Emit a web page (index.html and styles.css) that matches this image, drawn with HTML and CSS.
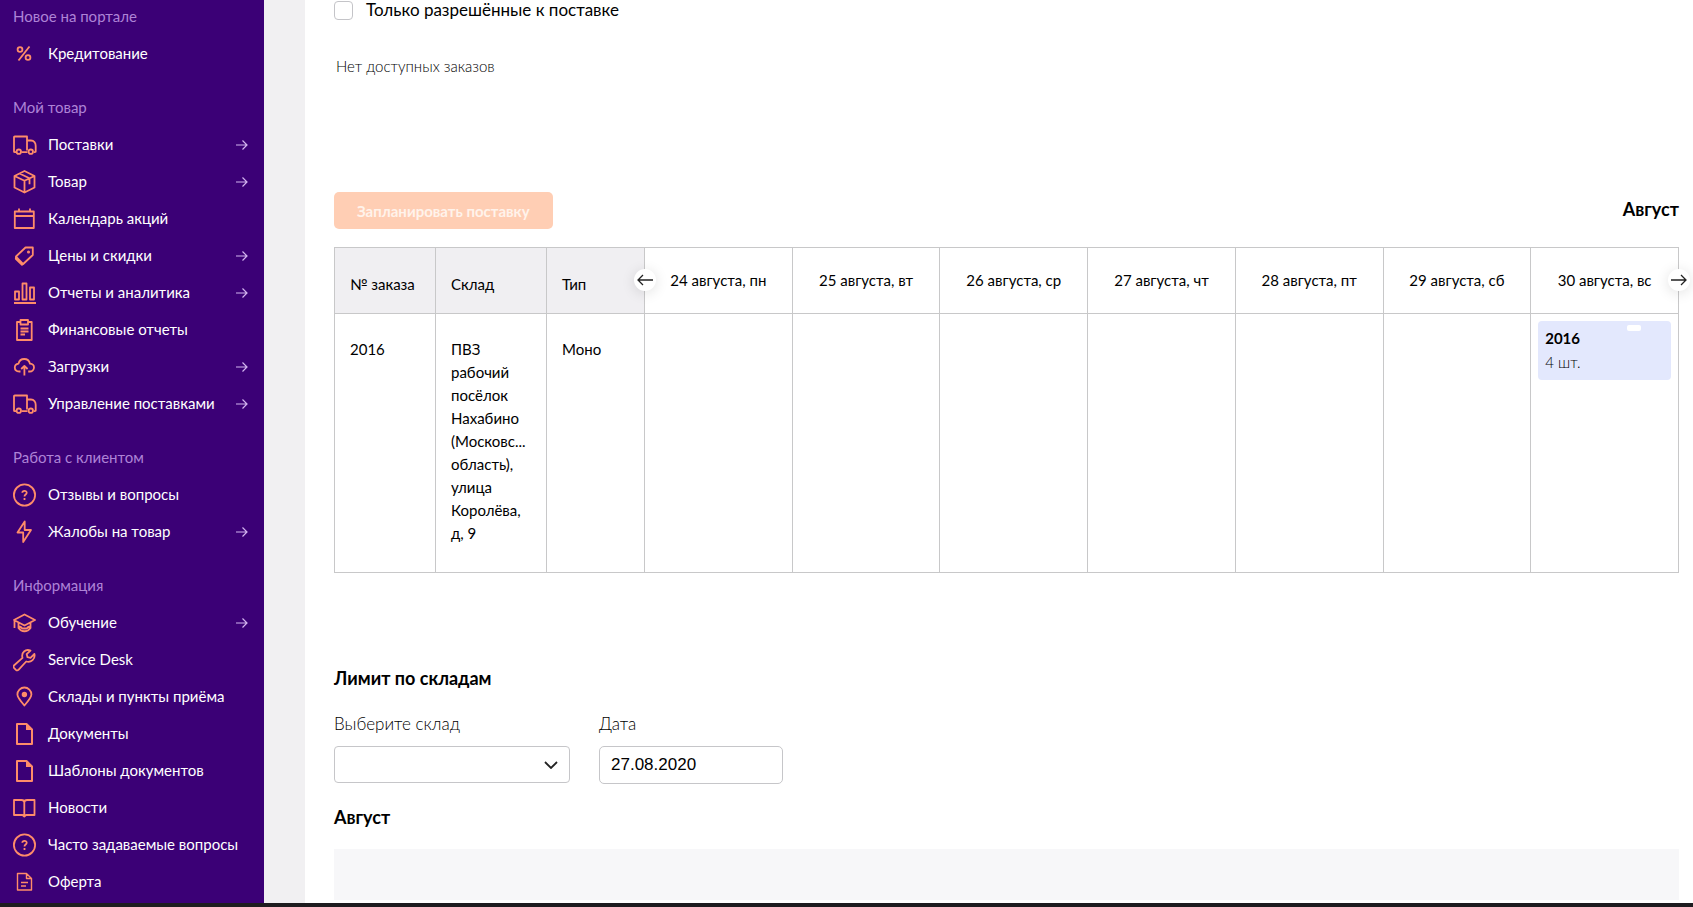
FILE: index.html
```html
<!DOCTYPE html>
<html lang="ru">
<head>
<meta charset="utf-8">
<title>Поставки</title>
<link rel="stylesheet" href="styles.css">
</head>
<body>
<svg class="defs" aria-hidden="true">
  <symbol id="arrow" viewBox="0 0 12 12"><path d="M0 6h11M6.500 1.500L11 6l-4.500 4.500"/></symbol>
  <symbol id="truck" viewBox="0 0 24 24"><path d="M3.500 19.200H1.800a.8.800 0 0 1-.8-.8V4.300a.8.800 0 0 1 .8-.8h12.200v14M8.500 19.200h6M14 7.500h4c3 0 4.700 2.500 4.700 5.500v5.400a.8.800 0 0 1-.8.800h-1"/><circle cx="5.800" cy="18.700" r="2.200"/><circle cx="17.800" cy="18.700" r="2.200"/></symbol>
  <symbol id="question" viewBox="0 0 24 24"><circle cx="11.500" cy="12" r="10.600"/><path d="M9.300 9.800c.2-2.600 4.500-2.500 4.400 0 0 1.800-2.200 1.600-2.200 3.600M11.500 15v1.900"/></symbol>
  <symbol id="doc" viewBox="0 0 24 24"><path stroke-width="2" d="M4 2h9.500L19 7.500V22H4z"/><path fill="currentColor" stroke="none" d="M13 2v6h6z"/></symbol>
</svg>
<div class="page">
  <div class="workspace">
    <nav class="sidebar" aria-label="Меню портала">
      <section class="group">
        <h2 class="group-title">Новое на портале</h2>
        <a class="item" href="#"><svg class="icon" viewBox="0 0 24 24"><circle cx="7" cy="7.500" r="2.400"/><circle cx="15" cy="15.500" r="2.400"/><path d="M16.500 4.500L5.500 18.500"/></svg><span class="label">Кредитование</span></a>
      </section>
      <section class="group">
        <h2 class="group-title">Мой товар</h2>
        <a class="item" href="#"><svg class="icon"><use href="#truck"/></svg><span class="label">Поставки</span><svg class="arrow"><use href="#arrow"/></svg></a>
        <a class="item" href="#"><svg class="icon" viewBox="0 0 24 24"><path d="M11.500 1L21.500 6v11.500l-10 5-10-5V6zM1.500 6l10 4.700L21.500 6M11.500 10.700v11.800M6.500 3.500l10 4.800v5.900"/></svg><span class="label">Товар</span><svg class="arrow"><use href="#arrow"/></svg></a>
        <a class="item" href="#"><svg class="icon" viewBox="0 0 24 24"><path d="M1.800 4.500h19v16.500h-19zM1.800 9h19M6 1.500v3M17 1.500v3"/></svg><span class="label">Календарь акций</span></a>
        <a class="item" href="#"><svg class="icon" viewBox="0 0 24 24"><path d="M12.500 3.500h7.300v7.500l-9.600 9L3 12.500zM3 12.500l-.2 2.300 6.200 6 1.200-.8"/><circle cx="15.500" cy="8" r=".6" fill="currentColor"/></svg><span class="label">Цены и скидки</span><svg class="arrow"><use href="#arrow"/></svg></a>
        <a class="item" href="#"><svg class="icon" viewBox="0 0 24 24"><path d="M1 22h22M2 10.500h4v8H2zM9.500 2.500h4v16h-4zM17 6.500h4v12h-4z"/></svg><span class="label">Отчеты и аналитика</span><svg class="arrow"><use href="#arrow"/></svg></a>
        <a class="item" href="#"><svg class="icon" viewBox="0 0 24 24"><path d="M7.500 4H4v18h14.700V4h-3M7.500 2h7.500v4.500H7.500zM7.500 10.500h8M7.500 13.500h8M7.500 16.500h4.500"/></svg><span class="label">Финансовые отчеты</span></a>
        <a class="item" href="#"><svg class="icon" viewBox="0 0 24 24"><path d="M7.500 16.500H6.300c-3-.2-4.500-2-4.500-4.100S3.300 9 5.500 8.600C6.200 5.500 8.500 4 11.200 4s5 1.500 5.800 4.700c2.300.2 4 1.800 4 3.800s-1.800 4-4.300 4H15.200M11.400 20.500v-9.500M8.200 14l3.200-3 3.200 3"/></svg><span class="label">Загрузки</span><svg class="arrow"><use href="#arrow"/></svg></a>
        <a class="item" href="#"><svg class="icon"><use href="#truck"/></svg><span class="label">Управление поставками</span><svg class="arrow"><use href="#arrow"/></svg></a>
      </section>
      <section class="group">
        <h2 class="group-title">Работа с клиентом</h2>
        <a class="item" href="#"><svg class="icon"><use href="#question"/></svg><span class="label">Отзывы и вопросы</span></a>
        <a class="item" href="#"><svg class="icon" viewBox="0 0 24 24"><path d="M11.700 1.500L4.500 12.500h5.700v9.500L18 10h-6.300z"/></svg><span class="label">Жалобы на товар</span><svg class="arrow"><use href="#arrow"/></svg></a>
      </section>
      <section class="group">
        <h2 class="group-title">Информация</h2>
        <a class="item" href="#"><svg class="icon" viewBox="0 0 24 24"><path d="M1 9l10.500-5.500L22 9l-10.500 5.500zM5.500 11.500V17c3 4.300 9 4.300 12 0v-5.500M5.500 15.500c1.800 0 3 .8 3.800 2h4.400c.8-1.200 2-2 3.800-2M1.500 9.500V17"/></svg><span class="label">Обучение</span><svg class="arrow"><use href="#arrow"/></svg></a>
        <a class="item" href="#"><svg class="icon" viewBox="0 0 24 24"><path d="M17.500 2.600c-5-2-9.500 2-8 7.300L1.200 17.200c-1 1-.8 2 0 2.900l1.700 1.700c.9.800 1.900.8 2.800-.1l7.500-8.200c5 1.500 9.300-2.700 8.200-7.500l-3.900 3.800-3-.6-.8-3z"/></svg><span class="label">Service Desk</span></a>
        <a class="item" href="#"><svg class="icon" viewBox="0 0 24 24"><path d="M11.400 20.500C7 15.500 4.400 12.500 4.400 9.500a7 7 0 0 1 14 0c0 3-2.600 6-7 11z"/><circle cx="11.400" cy="9.500" r="1.800" fill="currentColor"/></svg><span class="label">Склады и пункты приёма</span></a>
        <a class="item" href="#"><svg class="icon"><use href="#doc"/></svg><span class="label">Документы</span></a>
        <a class="item" href="#"><svg class="icon"><use href="#doc"/></svg><span class="label">Шаблоны документов</span></a>
        <a class="item" href="#"><svg class="icon" viewBox="0 0 24 24"><path d="M11.300 20.500L9.500 19H1V4h7.500c1.800 0 2.800.8 2.800 2.500zM11.300 20.500L13 19h8.500V4H14c-1.800 0-2.700.8-2.700 2.500"/></svg><span class="label">Новости</span></a>
        <a class="item" href="#"><svg class="icon"><use href="#question"/></svg><span class="label">Часто задаваемые вопросы</span></a>
        <a class="item" href="#"><svg class="icon" viewBox="0 0 24 24"><path stroke-width="1.400" d="M4.500 3.500h9l5 5V20h-14zM13.500 3.500v5h5M8 12.500h7M8 16h5"/></svg><span class="label">Оферта</span></a>
      </section>
    </nav>
    <main class="content">
      <label class="check"><input class="check-box" type="checkbox"><span class="check-text">Только разрешённые к поставке</span></label>
      <p class="empty">Нет доступных заказов</p>
      <div class="toolbar">
        <button class="plan" type="button" disabled>Запланировать поставку</button>
        <h2 class="title">Август</h2>
      </div>
      <div class="schedule">
        <table class="grid">
          <colgroup><col class="col-id"><col class="col-store"><col class="col-type"><col span="7"></colgroup>
          <thead>
            <tr><th class="info">№ заказа</th><th class="info">Склад</th><th class="info">Тип</th><th>24 августа, пн</th><th>25 августа, вт</th><th>26 августа, ср</th><th>27 августа, чт</th><th>28 августа, пт</th><th>29 августа, сб</th><th>30 августа, вс</th></tr>
          </thead>
          <tbody>
            <tr><td class="cell">2016</td><td class="cell">ПВЗ<br>рабочий<br>посёлок<br>Нахабино<br>(Московс...<br>область),<br>улица<br>Королёва,<br>д, 9</td><td class="cell">Моно</td><td></td><td></td><td></td><td></td><td></td><td></td><td class="day"><div class="order"><b class="order-id">2016</b><span class="order-count">4 шт.</span><i class="order-mark"></i></div></td></tr>
          </tbody>
        </table>
        <button class="step prev" type="button" aria-label="Назад"><svg viewBox="0 0 16 12"><path d="M16 6H1M6 1L1 6l5 5"/></svg></button>
        <button class="step next" type="button" aria-label="Вперёд"><svg viewBox="0 0 16 12"><path d="M0 6h15M10 1l5 5-5 5"/></svg></button>
      </div>
      <h2 class="title">Лимит по складам</h2>
      <form class="filters">
        <div class="field">
          <label class="caption" for="store">Выберите склад</label>
          <div class="select-wrap">
            <select class="control select" id="store"><option></option></select>
            <svg class="chevron" viewBox="0 0 14 8"><path d="M1 1l6 6 6-6"/></svg>
          </div>
        </div>
        <div class="field">
          <label class="caption" for="date">Дата</label>
          <input class="control date" id="date" type="text" value="27.08.2020">
        </div>
      </form>
      <h2 class="title">Август</h2>
      <div class="panel"></div>
    </main>
  </div>
  <footer class="edge"></footer>
</div>
</body>
</html>
```
FILE: styles.css
```css
* { box-sizing: border-box; }
body {
  margin: 0;
  font-family: Lato, "Noto Sans", sans-serif;
  font-size: 15px;
  color: #000;
  background: #fff;
}
h2, p { margin: 0; }
svg { fill: none; stroke: currentColor; }
.defs { position: absolute; width: 0; height: 0; }
.page { display: flex; flex-direction: column; height: 100vh; overflow: hidden; }
.workspace { display: flex; flex: 1; min-height: 0; }
.edge { flex: none; height: 4px; background: #1e1c1f; }

.sidebar {
  flex: none;
  width: 264px;
  padding: 6px 16px 0 13px;
  overflow: hidden;
  background: #3b0076;
}
.group { margin-bottom: 25px; }
.group-title {
  margin-bottom: 9px;
  line-height: 20px;
  font-size: 15px;
  font-weight: 400;
  color: #ae83d6;
}
.item {
  display: flex;
  align-items: center;
  gap: 11px;
  height: 37px;
  color: #fff;
  text-decoration: none;
  white-space: nowrap;
}
.label { flex: 1; padding-bottom: 2px; }
.icon { flex: none; width: 24px; height: 24px; color: #ff8c69; stroke-width: 1.8; stroke-linejoin: round; }
.arrow { flex: none; width: 12px; height: 12px; color: #d3b5ef; stroke-width: 1.2; }

.content {
  flex: 1;
  min-width: 0;
  padding: 0 14px 3px 29px;
  border-left: 41px solid #f1f0f2;
}
.check { display: flex; align-items: center; gap: 13px; height: 20px; font-size: 17px; }
.check-text { padding-bottom: 2px; }
.check-box {
  appearance: none;
  width: 19px;
  height: 19px;
  margin: 0;
  border: 1px solid #c4c4c8;
  border-radius: 4px;
  background: #fff;
}
.empty { padding: 35px 2px 0; line-height: 23px; font-weight: 300; }
.toolbar {
  display: flex;
  align-items: center;
  justify-content: space-between;
  margin: 114px 0 18px;
}
.plan {
  height: 37px;
  padding: 0 23px;
  border: 0;
  border-radius: 5px;
  background: #ffceb4;
  color: #fff3eb;
  font: 700 15px Lato, "Noto Sans", sans-serif;
}
.title { font-size: 18px; line-height: 24px; font-weight: 700; }
.toolbar .title { padding-bottom: 3px; }

.schedule { position: relative; margin-bottom: 93px; }
.grid { width: 100%; table-layout: fixed; border-collapse: collapse; }
.grid th, .grid td { padding: 0; border: 1px solid #c8c8c9; vertical-align: top; }
.grid th { height: 66px; font-weight: 400; line-height: 23px; vertical-align: middle; }
.grid .info { padding: 7px 15px 0; text-align: left; background: #f0eff2; }
.grid .cell { padding: 24px 15px 27px; line-height: 23px; white-space: nowrap; }
.grid .day { padding: 7px; }
.col-id { width: 101px; }
.col-store { width: 111px; }
.col-type { width: 98px; }
.order {
  position: relative;
  display: flex;
  flex-direction: column;
  padding: 5px 7px 6px;
  border-radius: 4px;
  background: #e3e8fd;
  line-height: 24px;
}
.order-count { font-weight: 300; }
.order-mark { position: absolute; top: 4px; right: 30px; width: 14px; height: 6px; border-radius: 2px; background: #fff; }
.step {
  position: absolute;
  top: 22px;
  display: grid;
  place-items: center;
  width: 22px;
  height: 22px;
  padding: 0;
  border: 0;
  border-radius: 50%;
  background: #fff;
  color: #222;
  box-shadow: 0 2px 14px rgba(0, 0, 0, .12);
}
.step svg { width: 16px; height: 12px; stroke-width: 1.3; }
.prev { left: 300px; }
.next { right: -11px; }

.filters { display: flex; gap: 29px; margin: 21px 0; }
.field { display: flex; flex-direction: column; gap: 9px; }
.caption { font-size: 17px; line-height: 26px; font-weight: 300; }
.control {
  display: block;
  height: 37px;
  border: 1px solid #c6c6c9;
  border-radius: 4px;
  background: #fff;
  color: #000;
  font-size: 17px;
}
.select-wrap { position: relative; }
.select { width: 236px; appearance: none; padding: 0 40px 0 12px; }
.chevron { position: absolute; right: 12px; top: 15px; width: 14px; height: 8px; stroke-width: 1.8; color: #222; pointer-events: none; }
.date { width: 184px; height: 38px; padding: 0 11px; font-family: "Liberation Sans", sans-serif; border-radius: 5px; }
.panel { height: 51px; margin-top: 20px; background: #f7f7f9; }
```
